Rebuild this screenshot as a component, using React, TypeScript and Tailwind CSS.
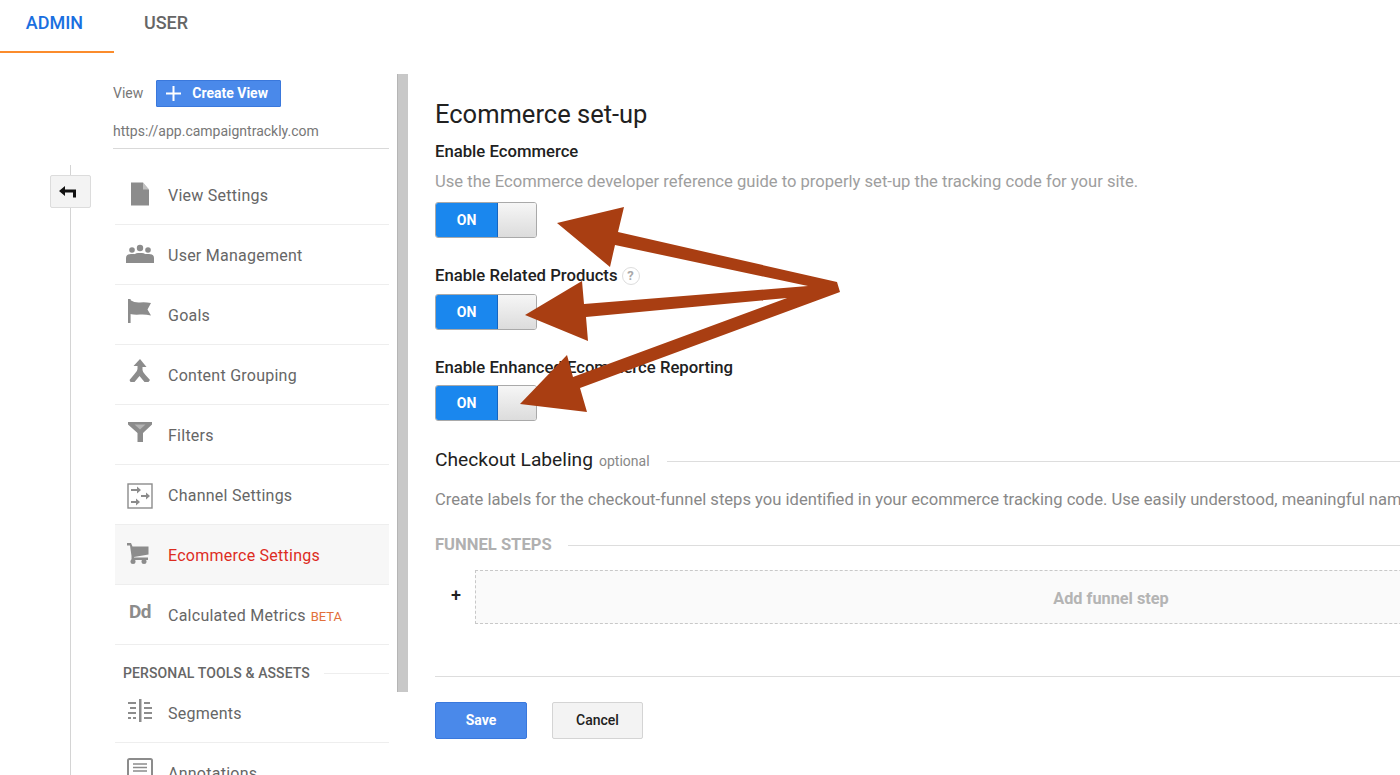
import type { ReactNode } from "react";

const DocIcon = () => (
  <svg width="22" height="24" viewBox="0 0 22 24" fill="#8c8c8c">
    <path d="M2 0.5h12l6 7v16H2z" />
    <path d="M14 0.5v7h6" fill="#fff" opacity="0.45" />
  </svg>
);

const UsersIcon = () => (
  <svg width="30" height="20" viewBox="0 0 30 20" fill="#8c8c8c">
    <circle cx="7" cy="6" r="2.8" />
    <circle cx="15" cy="4" r="3.2" />
    <circle cx="23" cy="6" r="2.8" />
    <path d="M1 19v-5q0-4 5-4h3q2 0 3 1l0 8z" />
    <path d="M29 19v-5q0-4-5-4h-3q-2 0-3 1v8z" />
    <path d="M9 19v-6q0-4 4-4h4q4 0 4 4v6z" />
  </svg>
);

const FlagIcon = () => (
  <svg width="26" height="26" viewBox="0 0 26 26" fill="#8c8c8c">
    <path d="M1 1h2.600v24H1z" />
    <path d="M3 2q5 3 10 2.500t11 0.500l-3.500 6.500 3.500 6q-6-1.500-11-1t-10-0.500z" />
  </svg>
);

const MergeIcon = () => (
  <svg width="22" height="24" viewBox="0 0 22 24" fill="#8c8c8c">
    <path d="M11 0l6.500 8h-4v3q0 2 3 5l4.500 5-1.500 2h-4l-5-6-5 6h-4l-1-2 5-6q3-3 3-5v-3h-4z" />
  </svg>
);

const FilterIcon = () => (
  <svg width="26" height="22" viewBox="0 0 26 22" fill="#8c8c8c">
    <path d="M1 1h24v2.500l-9 8.500v9h-5.500v-9l-9.500-8.500z" />
    <path d="M7.500 3.500h11l-5.500 5z" fill="#fff" opacity="0.35" />
  </svg>
);

const ChannelIcon = () => (
  <svg width="26" height="26" viewBox="0 0 26 26" fill="none" stroke="#8c8c8c">
    <rect x="1" y="1" width="24" height="24" strokeWidth="1.400" />
    <path d="M4 7h7M4 19h7M14 13h7" strokeWidth="2" />
    <path d="M10 3.500l4 3.500-4 3.500zM19 9.500l4 3.500-4 3.500zM9 15.500l4 3.500-4 3.500z" fill="#8c8c8c" stroke="none" />
  </svg>
);

const CartIcon = () => (
  <svg width="22" height="21" viewBox="0 0 22 21" fill="#8c8c8c">
    <path d="M0 0h4l1.500 3.500H21.500v8l-14.500 2.500v0.500h14v2.500H4.500v-4L3 2.500H0z" />
    <circle cx="6" cy="18.500" r="2.500" />
    <circle cx="17" cy="18.500" r="2.500" />
  </svg>
);

const SegmentsIcon = () => (
  <svg width="26" height="23" viewBox="0 0 26 23" fill="#8c8c8c">
    <path d="M12 0h2.500v23H12z" />
    <path d="M1 3h8v2H1zM3 8h6v2H3zM1 13h8v2H1zM1 18h3v2H1zM6 18h3v2H6z" />
    <path d="M17 3h6v2h-6zM17 8h8v2h-8zM17 13h8v2h-8zM17 18h8v2h-8z" />
  </svg>
);

const NotesIcon = () => (
  <svg width="26" height="22" viewBox="0 0 26 22" fill="none" stroke="#8c8c8c">
    <rect x="1" y="1" width="24" height="20" rx="1.500" strokeWidth="2" />
    <path d="M6 6h14M6 9.500h14M6 13h14" strokeWidth="1.500" />
  </svg>
);

const menu: { label: string; icon: ReactNode; iconClass?: string; beta?: boolean; active?: boolean }[] = [
  { label: "View Settings", icon: <DocIcon />, iconClass: "-mt-[1px]" },
  { label: "User Management", icon: <UsersIcon />, iconClass: "-mt-[1px]" },
  { label: "Goals", icon: <FlagIcon />, iconClass: "-mt-[7px]" },
  { label: "Content Grouping", icon: <MergeIcon />, iconClass: "-mt-[7px]" },
  { label: "Filters", icon: <FilterIcon />, iconClass: "-mt-[5px]" },
  { label: "Channel Settings", icon: <ChannelIcon />, iconClass: "mt-[3px]" },
  { label: "Ecommerce Settings", icon: <CartIcon />, iconClass: "-mt-[2px] pr-[10px]", active: true },
  {
    label: "Calculated Metrics",
    icon: <span className="text-[19px] font-bold leading-none tracking-tight text-[#8c8c8c]">Dd</span>,
    iconClass: "-mt-[7px]",
    beta: true,
  },
];

function MenuRow({ label, icon, iconClass, beta, active }: (typeof menu)[number]) {
  return (
    <div
      className={`flex h-[60px] shrink-0 items-center border-b border-[#eeeeee] pl-[2px] text-[16px] ${
        active ? "bg-[#f7f7f7] text-[#dd2c1f]" : "text-[#666666]"
      }`}
    >
      <div className={`flex w-[51px] shrink-0 justify-center pr-[5px] ${iconClass ?? ""}`}>{icon}</div>
      <span className="mt-[2px] tracking-[0.25px]">{label}</span>
      {beta && <span className="ml-[5px] mt-[4px] text-[13px] text-[#e2703a]">BETA</span>}
    </div>
  );
}

function Toggle() {
  return (
    <div className="flex h-[36px] w-[102px] overflow-hidden rounded-[3px] border border-[#a9a9a9]">
      <div className="flex w-[62px] items-center justify-center border-r border-[#1565c0] bg-[#1a87ee] text-[14px] font-bold text-white">
        ON
      </div>
      <div className="flex-1 bg-gradient-to-b from-[#f6f6f6] to-[#dcdcdc]" />
    </div>
  );
}

export default function App() {
  return (
    <div
      className="relative h-[775px] w-[1400px] overflow-hidden bg-white"
      style={{ fontFamily: "Roboto, sans-serif" }}
    >
      <div className="flex h-[53px] text-[18px] font-medium">
        <div className="flex h-[53px] w-[114px] items-center justify-center border-b-2 border-[#fb8c2c] pb-[7px] pr-[5px] text-[#1a6fe0]">
          ADMIN
        </div>
        <div className="flex w-[104px] items-center justify-center pb-[9px] text-[#666666]">USER</div>
      </div>

      <div className="flex h-[722px]">
        <div className="ml-[50px] flex w-[41px] shrink-0 flex-col items-center pt-[112px]">
          <div className="h-[10px] w-px bg-[#d4d4d4]" />
          <div className="flex h-[33px] w-[41px] items-center justify-center rounded-[2px] border border-[#dcdcdc] bg-[#f3f3f3] pr-[5px]">
            <svg width="20" height="14" viewBox="0 0 20 14" fill="#111">
              <path d="M1 6l6-5v3.500h11v8h-3v-5H7V11z" />
            </svg>
          </div>
          <div className="w-px flex-1 bg-[#d4d4d4]" />
        </div>

        <div className="ml-[22px] flex w-[276px] shrink-0 flex-col overflow-hidden">
          <div className="mt-[27px] flex h-[27px] shrink-0 items-center text-[14px] text-[#777777]">
            View
            <div className="ml-[13px] flex h-[27px] w-[125px] items-center rounded-[1px] border border-[#3a78dc] bg-[#4a89ea] text-[14px] font-bold text-white">
              <svg className="ml-[9px]" width="15" height="15" viewBox="0 0 15 15" stroke="#fff" strokeWidth="2">
                <path d="M7.500 0v15M0 7.500h15" />
              </svg>
              <span className="ml-[11px]">Create View</span>
            </div>
          </div>
          <div className="mt-[10px] h-[32px] shrink-0 border-b border-[#d9d9d9] text-[14px] leading-[28px] text-[#777777]">
            https://app.campaigntrackly.com
          </div>
          <div className="ml-[2px] mt-[16px] flex shrink-0 flex-col">
            {menu.map((item) => (
              <MenuRow key={item.label} {...item} />
            ))}
            <div className="flex h-[38px] shrink-0 items-center pl-[8px] pt-[18px] text-[14px] font-medium tracking-[0.1px] text-[#666666]">
              PERSONAL TOOLS &amp; ASSETS
              <div className="ml-[14px] h-px flex-1 bg-[#eeeeee]" />
            </div>
            <MenuRow label="Segments" icon={<SegmentsIcon />} iconClass="-mt-[5px]" />
            <MenuRow label="Annotations" icon={<NotesIcon />} iconClass="-mt-[7px]" />
          </div>
        </div>

        <div className="ml-[8px] mt-[21px] h-[618px] w-[11px] shrink-0 border-l border-[#b5b5b5] bg-[#c8c8c8]" />

        <div className="ml-[27px] min-w-0 flex-1 overflow-hidden">
          <div className="w-[1312px]">
            <h1 className="mt-[44px] text-[25.500px] leading-[34px] text-[#212121]">Ecommerce set-up</h1>
            <div className="mt-[11px] text-[16.700px] font-medium leading-[20px] text-[#212121]">Enable Ecommerce</div>
            <div className="mt-[10px] whitespace-nowrap text-[16.600px] leading-[20px] text-[#9e9e9e]">
              Use the Ecommerce developer reference guide to properly set-up the tracking code for your site.
            </div>
            <div className="mt-[10px]">
              <Toggle />
            </div>
            <div className="mt-[28px] flex h-[20px] items-center text-[16.700px] font-medium text-[#212121]">
              Enable Related Products
              <span className="ml-[4px] flex h-[18px] w-[18px] items-center justify-center rounded-full border border-[#dddddd] text-[13px] font-bold text-[#aaaaaa]">
                ?
              </span>
            </div>
            <div className="mt-[8px]">
              <Toggle />
            </div>
            <div className="mt-[28px] h-[20px] text-[16.700px] font-medium leading-[20px] text-[#212121]">
              Enable Enhanced Ecommerce Reporting
            </div>
            <div className="mt-[7px]">
              <Toggle />
            </div>
            <div className="mt-[27px] flex h-[24px] items-center">
              <span className="text-[19.200px] text-[#212121]">Checkout Labeling</span>
              <span className="ml-[6px] mt-[3px] text-[14px] text-[#888888]">optional</span>
              <div className="ml-[17px] mt-[2px] h-px flex-1 bg-[#dddddd]" />
            </div>
            <div className="mt-[18px] h-[20px] whitespace-nowrap text-[16.600px] leading-[20px] text-[#888888]">
              Create labels for the checkout-funnel steps you identified in your ecommerce tracking code. Use easily
              understood, meaningful names.
            </div>
            <div className="mt-[25px] flex h-[20px] items-center">
              <span className="text-[16.600px] font-bold text-[#b0b0b0]">FUNNEL STEPS</span>
              <div className="ml-[16px] h-px flex-1 bg-[#dddddd]" />
            </div>
            <div className="mt-[15px] flex h-[54px] items-center">
              <div className="flex w-[40px] justify-center pb-[6px] pl-[2px] text-[18px] font-medium text-[#212121]">+</div>
              <div className="flex h-[54px] flex-1 items-center justify-center border border-dashed border-[#c8c8c8] bg-[#fafafa] pt-[4px] text-[16.300px] font-bold text-[#b4b4b4]">
                Add funnel step
              </div>
            </div>
            <div className="mt-[52px] h-px bg-[#dddddd]" />
            <div className="mt-[25px] flex gap-[25px] text-[14px] font-bold">
              <div className="flex h-[37px] w-[92px] items-center justify-center rounded-[2px] border border-[#3a78dc] bg-[#4a89ea] text-white">
                Save
              </div>
              <div className="flex h-[37px] w-[91px] items-center justify-center rounded-[2px] border border-[#d4d4d4] bg-[#f3f3f3] text-[14px] font-medium text-[#212121]">
                Cancel
              </div>
            </div>
          </div>
        </div>
      </div>

      <svg className="pointer-events-none absolute left-0 top-0" width="1400" height="775" viewBox="0 0 1400 775">
        <path
          fill="#a93e12"
          d="M837 282L618 232L624 207L557 223L610 267L615 245L808 286L584 304L582 281L525 315L588 341L586 317L787 298L573 377L567 355L520 404L587 412L580 388L840 292Z"
        />
      </svg>
    </div>
  );
}
